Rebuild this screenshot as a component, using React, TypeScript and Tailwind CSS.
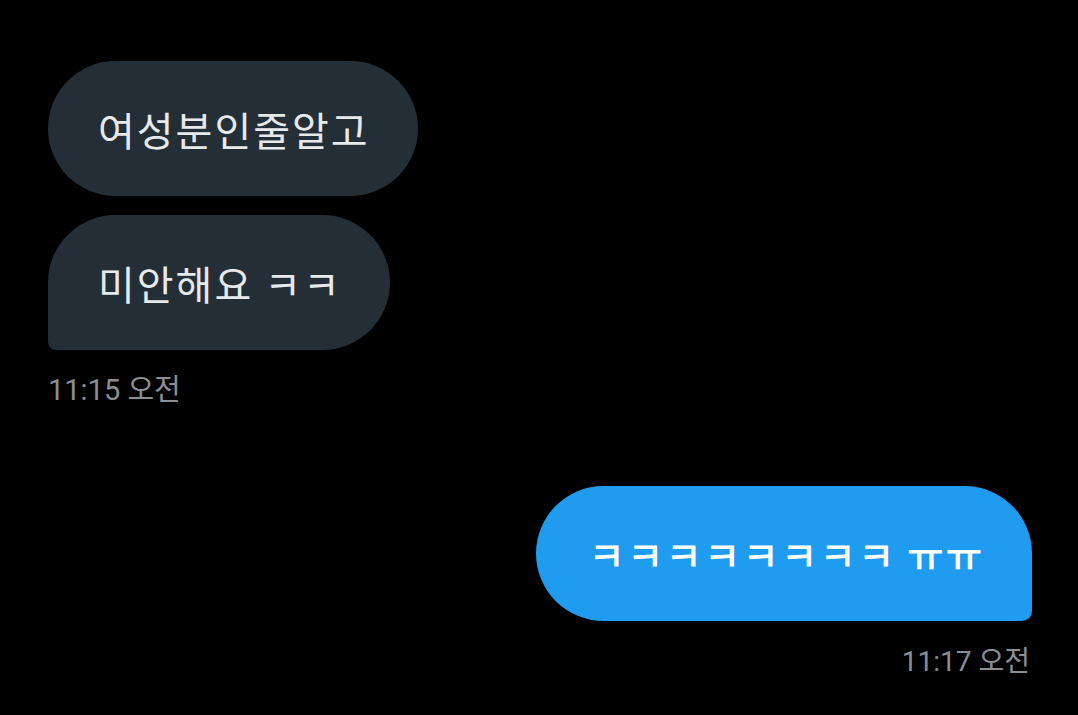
import React from 'react';

const font = { fontFamily: '"Noto Sans CJK KR", "Noto Sans", sans-serif' };
const timeFont = { fontFamily: 'Roboto, "Noto Sans CJK KR", sans-serif' };

export default function App() {
  const received = [
    { text: '여성분인줄알고', shape: 'rounded-[68px]' },
    { text: '미안해요 ㅋㅋ', shape: 'rounded-[68px] rounded-bl-[8px]' },
  ];

  return (
    <div className="w-[1078px] h-[715px] bg-black overflow-hidden" style={font}>
      <div className="flex flex-col items-start pl-12 pr-[46px] pt-[61px]">
        <div className="flex flex-col items-start gap-[19px]">
          {received.map((m) => (
            <div
              key={m.text}
              className={`h-[135px] flex items-center pl-[50px] pr-[48px] bg-[#242e36] text-[#e7e9ea] text-[40px] tracking-[2px] leading-none ${m.shape}`}
            >
              {m.text}
            </div>
          ))}
        </div>
        <div className="mt-[22px] text-[29px] leading-[36px] text-[#8b8e92]" style={timeFont}>
          11:15 오전
        </div>

        <div className="self-end mt-[78px] flex flex-col items-end">
          <div className="h-[135px] flex items-center pl-[52px] pr-[48px] bg-[#1f9bf0] text-white text-[40px] tracking-[1.7px] font-medium leading-none rounded-[68px] rounded-br-[10px]">
            ㅋㅋㅋㅋㅋㅋㅋㅋ ㅠㅠ
          </div>
          <div className="mt-[23px] mr-[2px] text-[28px] leading-[36px] text-[#8b8e92]" style={timeFont}>
            11:17 오전
          </div>
        </div>
      </div>
    </div>
  );
}
